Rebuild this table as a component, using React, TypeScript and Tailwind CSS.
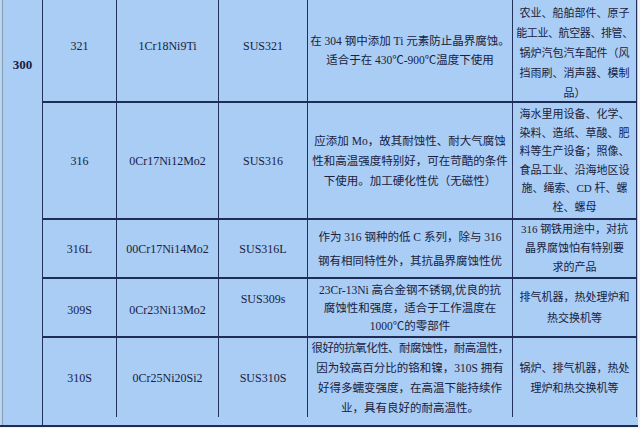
import React from "react";

type Row = {
  h: string;
  grade: string;
  cn: string;
  jis: string;
  props: string[];
  uses: string[];
  propsLeading?: string;
  usesLeading?: string;
  leftPad?: string;
  jisPad?: string;
  usesPad?: string;
};

const ROWS: Row[] = [
  {
    h: "h-[103px]",
    grade: "321",
    cn: "1Cr18Ni9Ti",
    jis: "SUS321",
    props: ["在 304 钢中添加 Ti 元素防止晶界腐蚀。", "适合于在 430℃-900℃温度下使用"],
    uses: ["农业、船舶部件、原子", "能工业、航空器、排管、", "锅炉汽包汽车配件（风", "挡雨刷、消声器、模制", "品）"],
    propsLeading: "leading-[19px]",
    leftPad: "pb-[10px]",
    jisPad: "pb-[10px]",
    usesPad: "pt-[5px]",
  },
  {
    h: "h-[117px]",
    grade: "316",
    cn: "0Cr17Ni12Mo2",
    jis: "SUS316",
    props: ["应添加 Mo，故其耐蚀性、耐大气腐蚀", "性和高温强度特别好，可在苛酷的条件", "下使用。加工硬化性优（无磁性）"],
    uses: ["海水里用设备、化学、", "染料、造纸、草酸、肥", "料等生产设备；照像、", "食品工业、沿海地区设", "施、绳索、CD 杆、螺", "栓、螺母"],
    usesLeading: "leading-[18.5px]",
  },
  {
    h: "h-[59px]",
    grade: "316L",
    cn: "00Cr17Ni14Mo2",
    jis: "SUS316L",
    props: ["作为 316 钢种的低 C 系列，除与 316", "钢有相同特性外，其抗晶界腐蚀性优"],
    uses: ["316 钢铁用途中，对抗", "晶界腐蚀怕有特别要", "求的产品"],
    propsLeading: "leading-[24px]",
    usesLeading: "leading-[19px]",
  },
  {
    h: "h-[59px]",
    grade: "309S",
    cn: "0Cr23Ni13Mo2",
    jis: "SUS309s",
    props: ["23Cr-13Ni 高合金钢不锈钢,优良的抗", "腐蚀性和强度，适合于工作温度在", "1000℃的零部件"],
    uses: ["排气机器，热处理炉和", "热交换机等"],
    propsLeading: "leading-[18px]",
    usesLeading: "leading-[21px]",
    leftPad: "pt-[5px]",
    jisPad: "pb-[18px]",
  },
  {
    h: "h-[79px]",
    grade: "310S",
    cn: "0Cr25Ni20Si2",
    jis: "SUS310S",
    props: ["很好的抗氧化性、耐腐蚀性，耐高温性，", "因为较高百分比的铬和镍，310S 拥有", "好得多蠕变强度，在高温下能持续作", "业，具有良好的耐高温性。"],
    uses: ["锅炉、排气机器，热处", "理炉和热交换机等"],
  },
];

const cell = "flex items-center justify-center border-r border-[#22305c] text-center";

// lines that only fit if the punctuation is squeezed, as in the original
const TIGHT = new Set(["很好的抗氧化性、耐腐蚀性，耐高温性，", "能工业、航空器、排管、"]);

export default function App() {
  return (
    <div className="w-[640px] h-[428px] bg-[#eef3f8] font-['Liberation_Serif','Noto_Sans_CJK_SC',serif] text-[#1a2140]">
      <div className="flex w-[638px] h-[427px] bg-[#a9cdf4] border-b-2 border-[#1f2c55]">
        <div className="w-[2px] bg-[#b6d6f6]" />
        {/* merged series cell */}
        <div className="w-[41px] shrink-0 border-l border-r border-l-[#8a9bab] border-r-[#22305c] flex justify-center pt-[57px]">
          <span className="text-[13px] font-bold leading-[16px]">300</span>
        </div>
        <div className="flex flex-col">
          {ROWS.map((r, i) => (
            <div
              key={r.grade}
              className={`flex ${r.h} ${i < ROWS.length - 1 ? "border-b-2 border-[#1f2c55]" : ""}`}
            >
              <div className={`${cell} w-[74px] text-[12px] ${r.leftPad ?? ""}`}>{r.grade}</div>
              <div className={`${cell} w-[102px] text-[12px] ${r.leftPad ?? ""}`}>{r.cn}</div>
              <div className={`${cell} w-[89px] text-[12px] ${r.jisPad ?? ""}`}>{r.jis}</div>
              <div className={`${cell} w-[205px] flex-col text-[11.5px] ${r.propsLeading ?? "leading-[20px]"}`}>
                {r.props.map((l) => (
                  <span key={l} className={`whitespace-nowrap ${TIGHT.has(l) ? "tracking-[-0.55px]" : ""}`}>
                    {l}
                  </span>
                ))}
              </div>
              <div className={`${cell} w-[124px] flex-col text-[11px] ${r.usesLeading ?? "leading-[20px]"} ${r.usesPad ?? ""}`}>
                {r.uses.map((l) => (
                  <span key={l} className={`whitespace-nowrap ${TIGHT.has(l) ? "tracking-[-0.4px]" : ""}`}>
                    {l}
                  </span>
                ))}
              </div>
            </div>
          ))}
        </div>
      </div>
    </div>
  );
}
